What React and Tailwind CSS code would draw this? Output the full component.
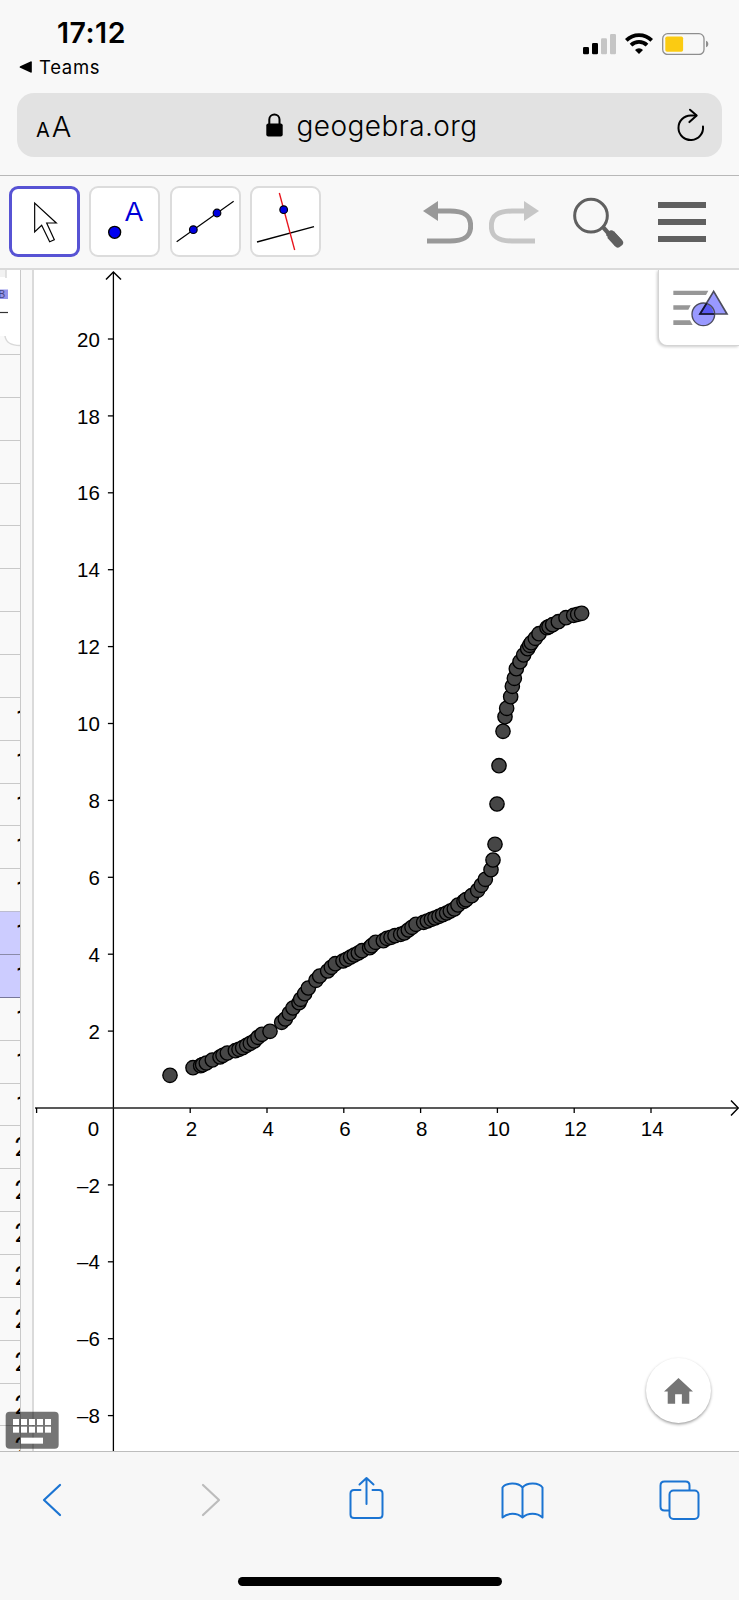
const LOWER = [
  [60, 676], [129, 653], [152, 647], [158, 644], [169, 639], [187, 630], [210, 621], [219, 616],
  [232, 609], [256, 602], [267, 598], [278, 593], [290, 586], [301, 580], [313, 573], [324, 562],
  [336, 553], [360, 544], [395, 517], [406, 507], [418, 490], [429, 474], [447, 458], [452, 448],
  [464, 431], [475, 414], [498, 391], [509, 378], [533, 363], [544, 352], [556, 341], [579, 333],
  [590, 328], [602, 321], [613, 315], [625, 309], [636, 302], [659, 293], [665, 287], [677, 277],
  [700, 272], [711, 265], [723, 262], [735, 257], [752, 253], [763, 249], [775, 240], [786, 232],
  [798, 223], [821, 217], [832, 213], [844, 208], [855, 204], [867, 199], [878, 194], [890, 189],
  [901, 183], [913, 177], [924, 165], [942, 154], [948, 149], [965, 137], [983, 121], [994, 106],
  [1006, 88], [1023, 59], [1029, 30],
];

const UPPER = [
  [105, 763], [111, 642], [117, 527], [129, 424], [135, 380], [140, 355], [152, 320], [157, 289],
  [163, 265], [169, 236], [180, 215], [191, 195], [203, 176], [209, 166], [214, 158], [226, 145],
  [237, 131], [261, 113], [267, 110], [278, 104], [295, 95], [318, 83], [341, 76], [353, 73], [365, 70],
];

const ORIGIN = { x: 113.4, y: 1108 };
const UNIT = 38.4;
const UNIT_Y = 38.45;
const X_TICKS = [2, 4, 6, 8, 10, 12, 14];
const Y_TICKS = [20, 18, 16, 14, 12, 10, 8, 6, 4, 2, -2, -4, -6, -8];
const ROWS = Array.from({ length: 26 }, (_, i) => i + 2);

function Dots({ points }) {
  return points.map(([x, y], i) => <circle key={i} cx={x} cy={y} r="21.5" />);
}

function StatusBar() {
  return (
    <div className="h-[93px] flex justify-between">
      <div className="pl-[19px] pt-[16px]">
        <div className="pl-[38px] h-[35px] text-[28.5px] leading-[33px] font-semibold tracking-[0.5px]">17:12</div>
        <div className="flex items-center gap-[7px] h-[32px]">
          <svg className="w-[13px] h-[12px]" viewBox="0 0 13 12">
            <path d="M1.2 5.2 11.5.4q1.3-.5 1.3.8v9.6q0 1.3-1.3.8L1.2 6.8Q0 6 1.2 5.2Z" />
          </svg>
          <span className="text-[18.5px] leading-6 tracking-[0.7px]">Teams</span>
        </div>
      </div>
      <div className="flex items-start gap-[9px] pt-[33px] pr-[30px]">
        <svg className="w-[33px] h-[22px]" viewBox="0 0 33 22">
          <rect x="0" y="14" width="6" height="7.3" rx="1.3" />
          <rect x="9" y="10" width="6" height="11.3" rx="1.3" />
          <rect x="18" y="5.3" width="6" height="16" rx="1.3" fill="#c5c5c5" />
          <rect x="27" y="1" width="6" height="20.3" rx="1.3" fill="#c5c5c5" />
        </svg>
        <svg className="w-[28px] h-[22px]" viewBox="0 0 28 22" fill="none" stroke="#000">
          <path d="M1.3 7.3a18 18 0 0 1 25.4 0" strokeWidth="3.8" />
          <path d="M6 12.1a11.5 11.5 0 0 1 16 0" strokeWidth="3.8" />
          <path d="M14 21l-4-4a5.6 5.6 0 0 1 8 0Z" fill="#000" stroke="none" />
        </svg>
        <svg className="w-[47px] h-[22px]" viewBox="0 0 47 22">
          <rect x=".7" y=".7" width="41.3" height="20.8" rx="5" fill="none" stroke="#8e8e8e" strokeWidth="1.3" />
          <rect x="3.3" y="3.4" width="17.8" height="15.4" rx="1.8" fill="#fbcb12" />
          <path d="M44 7.8c3.1 1 3.1 5.4 0 6.4Z" fill="#8e8e8e" />
        </svg>
      </div>
    </div>
  );
}

function AddressBar() {
  return (
    <div className="mx-[17px] h-[64px] rounded-[17px] bg-[#e2e2e2] flex items-center justify-between pl-[19px] pr-[17px]">
      <div className="flex items-baseline gap-[2px] w-[35px] pt-[2px]">
        <span className="text-[20px] leading-none">A</span>
        <span className="text-[29px] leading-none font-light">A</span>
      </div>
      <div className="flex items-center gap-[14px] pr-[4px]">
        <svg className="w-[17px] h-[24px]" viewBox="0 0 17 24">
          <rect x=".3" y="10.4" width="16.4" height="13" rx="2" />
          <path d="M3.3 11V6.5a5.1 5.1 0 0 1 10.2 0V11" fill="none" stroke="#000" strokeWidth="2" />
        </svg>
        <span className="text-[28px] leading-[36px] w-[182px] pt-px font-light tracking-[0.42px] whitespace-nowrap">geogebra.org</span>
      </div>
      <svg className="w-[28px] h-[34px]" viewBox="0 0 28 34" fill="none" stroke="#000" strokeWidth="2" strokeLinecap="round" strokeLinejoin="round">
        <path d="M26 18.5A12.3 12.3 0 1 1 13.7 7.5H19" />
        <path d="M13 1.7l6.7 5.8-7.3 6.6" />
      </svg>
    </div>
  );
}

function Tool({ selected, children }) {
  return (
    <div
      className={`w-[71px] h-[71px] rounded-[9px] bg-white ${
        selected ? 'border-3 border-[#5753d4]' : 'border-2 border-[#dcdcdc]'
      }`}
    >
      <svg className={selected ? 'size-[71px] -m-[3px]' : 'size-[71px] -m-[2px]'} viewBox="0 0 213 213">
        {children}
      </svg>
    </div>
  );
}

function Toolbar() {
  return (
    <div className="h-[94px] border-b-2 border-[#dadada] bg-[#f8f8f8] flex items-center justify-between pl-[9px] pr-[33px]">
      <div className="flex gap-[9.3px] pb-[2px]">
        <Tool selected>
          <path d="M77 51V138L98 118l24 49 14-6-23-50h29Z" fill="#fff" stroke="#000" strokeWidth="3.5" />
        </Tool>
        <Tool>
          <circle cx="77" cy="139" r="18" fill="#0000f0" stroke="#000" strokeWidth="4" />
          <text x="108" y="105" fontSize="81" fill="#0000d8" className="font-['Liberation_Sans',sans-serif]">A</text>
        </Tool>
        <Tool>
          <g stroke="#000" strokeWidth="3.5">
            <path d="M20 167 191 46" />
            <circle cx="70" cy="131" r="11.5" fill="#0000e0" />
            <circle cx="141" cy="81" r="11.5" fill="#0000e0" />
          </g>
        </Tool>
        <Tool>
          <path d="M21 168 192 122" stroke="#000" strokeWidth="4" />
          <path d="M88 21 134 192" stroke="#e8141c" strokeWidth="4" />
          <circle cx="101" cy="71" r="11.5" fill="#0000e0" stroke="#000" strokeWidth="3.5" />
        </Tool>
      </div>
      <div className="flex items-center">
        <svg className="w-[50px] h-[45px]" viewBox="162 108 150 135">
          <path d="M162 141 207 111V171Z" fill="#999" />
          <path d="M205 141H243C289 141 305 156 305 186S289 231 243 231H174" fill="none" stroke="#999" strokeWidth="15" />
        </svg>
        <svg className="w-[50px] h-[45px] ml-[16px]" viewBox="360 108 150 135">
          <path d="M510 141 465 111V171Z" fill="#c6c6c6" />
          <path d="M467 141H429C383 141 367 156 367 186S383 231 429 231H498" fill="none" stroke="#c6c6c6" strokeWidth="15" />
        </svg>
        <svg className="w-[51px] h-[51px] ml-[34px]" viewBox="611 97 153 153">
          <circle cx="665" cy="153" r="49" fill="none" stroke="#606060" strokeWidth="9" />
          <path d="M699 185 722 211" stroke="#606060" strokeWidth="13" />
          <path d="M724 210 748 236" stroke="#606060" strokeWidth="28" strokeLinejoin="round" />
          <path d="M711 212q-1-7 5-11l8-4q5-1 9 3l27 28q4 7-1 13l-9 7q-6 3-11-2Z" fill="#606060" />
        </svg>
        <div className="flex flex-col gap-[11.5px] w-[48px] ml-[34px]">
          <div className="h-[5.6px] bg-[#606060]" />
          <div className="h-[5.6px] bg-[#606060]" />
          <div className="h-[5.6px] bg-[#606060]" />
        </div>
      </div>
    </div>
  );
}

function Sheet() {
  return (
    <div className="w-[21px] shrink-0 bg-[#f9f9f9] border-r border-[#c8c8c8] overflow-hidden">
      <svg className="w-[20px] h-[84px]" viewBox="0 270 20 84">
        <path d="M0 270H20V346C11 346 7 343 5 336H0Z" fill="#fff" />
        <path d="M0 270H6V277H0Z" fill="#f2f2f2" />
        <path d="M6 270V278M5 336C6 343 11 345.500 20 345.500" fill="none" stroke="#d9d9d9" strokeWidth="1.500" />
        <rect x="-4" y="289.500" width="12" height="9.500" fill="#9494ea" />
        <text x="-1.500" y="298" fontSize="10" fill="#454580" className="font-['Liberation_Sans',sans-serif]">B</text>
        <path d="M0 312.500H8" stroke="#333" strokeWidth="1.200" />
      </svg>
      {ROWS.map((n) => (
        <div
          key={n}
          className={`h-[42.87px] flex items-center whitespace-nowrap border-t font-[Roboto,sans-serif] text-[26px] leading-none ${
            n < 20 ? 'pl-[15.5px]' : 'pl-[14.5px]'
          } ${
            n === 15 ? 'bg-[#ccccff] border-[#bcbcd0]' : n === 16 ? 'bg-[#ccccff] border-[#8a8aa8]' : n === 17 ? 'border-[#77779a]' : 'border-[#c9c9c9]'
          }`}
        >
          {n > 9 && n}
        </div>
      ))}
    </div>
  );
}

function Graph() {
  return (
    <svg className="block w-[705px] h-[1181px]" viewBox="34 270 705 1181">
      <g stroke="#000" strokeWidth="1.300" fill="none">
        <path d="M113.400 272V1451" />
        <path d="M106 279.500 113.400 272 121 279.500" strokeWidth="1.500" />
        <path d="M35 1108H738" stroke="#222" />
        <path d="M731 1100.500 738.300 1108 731 1115.500" strokeWidth="1.500" />
        <path d="M36.600 1108V1113" />
        {X_TICKS.map((n) => (
          <path key={n} d={`M${ORIGIN.x + n * UNIT} ${ORIGIN.y}v5`} />
        ))}
        {Y_TICKS.map((n) => (
          <path key={n} d={`M${ORIGIN.x} ${ORIGIN.y - n * UNIT_Y}h-5.500`} />
        ))}
      </g>
      <g fontSize="20.500" className="font-['Liberation_Sans',sans-serif]">
        <text x="93.500" y="1135.500" textAnchor="middle">0</text>
        {X_TICKS.map((n) => (
          <text key={n} x={ORIGIN.x + n * UNIT + 1.2} y="1135.500" textAnchor="middle">{n}</text>
        ))}
        {Y_TICKS.map((n) => (
          <text key={n} x="99.800" y={ORIGIN.y - n * UNIT_Y + 7.6} textAnchor="end">
            {n < 0 ? `–${-n}` : n}
          </text>
        ))}
      </g>
      <g fill="#464646" stroke="#000" strokeWidth="4">
        <g transform="translate(150 850) scale(0.33333)">
          <Dots points={LOWER} />
        </g>
        <g transform="translate(460 590) scale(0.33333)">
          <Dots points={UPPER} />
        </g>
      </g>
    </svg>
  );
}

function StyleBarButton() {
  return (
    <div className="absolute right-0 top-0 w-[81px] h-[76px] bg-white rounded-bl-[9px] border-l border-b border-[#d4d4d4] shadow-[-1px_1px_3px_rgba(0,0,0,0.2)]">
      <svg className="w-[57px] h-[38px] ml-[12.5px] mt-[18.5px]" viewBox="908 370 171 114">
        <path d="M912 375H1017L1010 388H912ZM912 419H964L957 432H912ZM912 464H962L970 478H912Z" fill="#979797" />
        <circle cx="1002" cy="446" r="34" fill="#9999ff" />
        <path d="M1033 377 1073 445H992Z" fill="#9999ff" />
        <path d="M1033 445H992L1012 414Q1030 422 1033 445Z" fill="#5959f2" />
        <circle cx="1002" cy="446" r="34" fill="none" stroke="#4c4c5c" strokeWidth="4" />
        <path d="M1033 377 1073 445H992Z" fill="none" stroke="#4c4c5c" strokeWidth="5" />
        <path d="M1012 413 992 445H1035" fill="none" stroke="#111133" strokeWidth="5" />
      </svg>
    </div>
  );
}

function KeyboardButton() {
  return (
    <svg className="absolute left-[5px] bottom-[2px] w-[54px] h-[38px]" viewBox="15 994 162 114">
      <rect x="17" y="996" width="159" height="111" rx="12" fill="#000" fillOpacity=".54" />
      <g fill="#fff">
        {[39, 63, 87, 111, 135].map((x) => (
          <g key={x}>
            <rect x={x} y="1018" width="18" height="18" />
            <rect x={x} y="1041" width="18" height="18" />
          </g>
        ))}
        <rect x="63" y="1074" width="66" height="18" />
      </g>
    </svg>
  );
}

function HomeButton() {
  return (
    <div className="absolute right-[28px] bottom-[28px] size-[65px] rounded-full bg-white flex items-center justify-center shadow-[0_1.5px_3px_rgba(0,0,0,0.38)]">
      <svg className="w-[29px] h-[26px]" viewBox="885 893 86 77">
        <path d="M928 893 971 933H960V969H938V941H918V969H896V933H885Z" fill="#757575" />
      </svg>
    </div>
  );
}

function BrowserBar() {
  return (
    <div className="h-[149px] border-t border-[#bdbdbd] bg-[#f7f7f7]">
      <div className="h-[96px] pl-[30px] pr-[38px] flex items-center justify-between text-[#1b74d2]">
        <div className="w-[44px] flex justify-center">
          <svg className="w-[20px] h-[34px]" viewBox="0 0 20 34" fill="none" stroke="currentColor" strokeWidth="2.200" strokeLinecap="round" strokeLinejoin="round">
            <path d="M18 2 2 17 18 32" />
          </svg>
        </div>
        <div className="w-[44px] flex justify-center pl-[5px]">
          <svg className="w-[20px] h-[34px]" viewBox="0 0 20 34" fill="none" stroke="#bcbcbc" strokeWidth="2.200" strokeLinecap="round" strokeLinejoin="round">
            <path d="M2 2 18 17 2 32" />
          </svg>
        </div>
        <div className="w-[44px] flex justify-center pl-[1px]">
          <svg className="w-[35px] h-[44px] -mt-[4px]" viewBox="0.5 0 35 44" fill="none" stroke="currentColor" strokeWidth="2" strokeLinecap="round" strokeLinejoin="round">
            <path d="M12 14H5.500Q2 14 2 17.500V38.500Q2 42 5.500 42H30.500Q34 42 34 38.500V17.500Q34 14 30.500 14H24" />
            <path d="M18 28V2M11 8.500 18 2 25 8.500" />
          </svg>
        </div>
        <div className="w-[44px] flex justify-center pl-[1px]">
          <svg className="w-[43px] h-[38px]" viewBox="0 0 43 38" fill="none" stroke="currentColor" strokeWidth="2" strokeLinejoin="round">
            <path d="M21.500 6.500C17 1 5 1.500 1.500 6.500V36.500C7 31.500 16 31.500 21.500 36.500C27 31.500 36 31.500 41.500 36.500V6.500C38 1.500 26 1 21.500 6.500ZM21.500 6.500V36.500" />
          </svg>
        </div>
        <div className="w-[44px] flex justify-center">
          <svg className="w-[41px] h-[40px]" viewBox="0 0 41 40" fill="none" stroke="currentColor" strokeWidth="2">
            <path d="M10.500 30.500H5.500Q1.500 30.500 1.500 26.500V5.500Q1.500 1.500 5.500 1.500H26.500Q30.500 1.500 30.500 5.500V10" />
            <rect x="10.500" y="10.500" width="29" height="28.500" rx="4" />
          </svg>
        </div>
      </div>
      <div className="mt-[29px] ml-[238px] w-[264px] h-[9px] rounded-full bg-black" />
    </div>
  );
}

export default function App() {
  return (
    <div className="w-[739px] h-[1600px] overflow-hidden flex flex-col bg-[#f8f8f8] text-black font-[Inter,sans-serif]">
      <div className="h-[176px] shrink-0 border-b border-[#b8b8b8] bg-[#f8f8f8]">
        <StatusBar />
        <AddressBar />
      </div>
      <Toolbar />
      <div className="relative h-[1181px] shrink-0 flex overflow-hidden bg-white">
        <Sheet />
        <div className="w-[13px] shrink-0 bg-[#f8f8f8] border-r-2 border-[#dadada]" />
        <Graph />
        <StyleBarButton />
        <KeyboardButton />
        <HomeButton />
      </div>
      <BrowserBar />
    </div>
  );
}
